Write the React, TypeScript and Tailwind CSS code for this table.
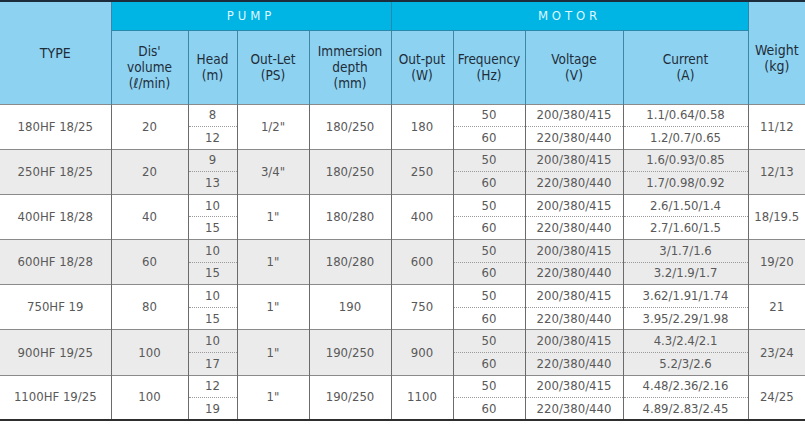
import React from "react"

type Row = {
  type: string
  vol: string
  head: [string, string]
  outlet: string
  depth: string
  output: string
  current: [string, string]
  weight: string
}

const rows: Row[] = [
  { type: "180HF 18/25", vol: "20", head: ["8", "12"], outlet: "1/2\"", depth: "180/250", output: "180", current: ["1.1/0.64/0.58", "1.2/0.7/0.65"], weight: "11/12" },
  { type: "250HF 18/25", vol: "20", head: ["9", "13"], outlet: "3/4\"", depth: "180/250", output: "250", current: ["1.6/0.93/0.85", "1.7/0.98/0.92"], weight: "12/13" },
  { type: "400HF 18/28", vol: "40", head: ["10", "15"], outlet: "1\"", depth: "180/280", output: "400", current: ["2.6/1.50/1.4", "2.7/1.60/1.5"], weight: "18/19.5" },
  { type: "600HF 18/28", vol: "60", head: ["10", "15"], outlet: "1\"", depth: "180/280", output: "600", current: ["3/1.7/1.6", "3.2/1.9/1.7"], weight: "19/20" },
  { type: "750HF 19", vol: "80", head: ["10", "15"], outlet: "1\"", depth: "190", output: "750", current: ["3.62/1.91/1.74", "3.95/2.29/1.98"], weight: "21" },
  { type: "900HF 19/25", vol: "100", head: ["10", "17"], outlet: "1\"", depth: "190/250", output: "900", current: ["4.3/2.4/2.1", "5.2/3/2.6"], weight: "23/24" },
  { type: "1100HF 19/25", vol: "100", head: ["12", "19"], outlet: "1\"", depth: "190/250", output: "1100", current: ["4.48/2.36/2.16", "4.89/2.83/2.45"], weight: "24/25" },
]

const font = { fontFamily: "'DejaVu Sans Condensed', 'Liberation Sans', sans-serif" }

const th = "border-x border-[#3f86a6] px-0 text-center align-middle font-normal text-[13.5px] leading-[16px] text-[#1f2d3a]"
const span = "border-x border-[#6b6b6b] text-center align-middle"
const top = "border-x border-[#6b6b6b] border-b border-b-[#9a9a9a] [border-bottom-style:dotted] text-center align-middle"
const bottom = "border-x border-[#6b6b6b] text-center align-middle"

export default function App() {
  return (
    <div className="w-[805px] h-[425px] bg-white overflow-hidden" style={font}>
      <table className="w-[805px] table-fixed border-collapse border-t-2 border-t-[#1c2c3c] border-b-2 border-b-[#2e2e2e] text-[13px] text-[#595959]">
        <colgroup>
          <col className="w-[111px]" />
          <col className="w-[77px]" />
          <col className="w-[49px]" />
          <col className="w-[72px]" />
          <col className="w-[82px]" />
          <col className="w-[62px]" />
          <col className="w-[72px]" />
          <col className="w-[98px]" />
          <col className="w-[125px]" />
          <col className="w-[57px]" />
        </colgroup>
        <thead>
          <tr className="h-[29px]">
            <th rowSpan={2} className={`${th} border-l-0 bg-[#8dd2f0] text-[14px]`}>TYPE</th>
            <th colSpan={4} className="border-x border-b border-[#2a88ad] bg-[#00b5e3] text-center text-[13px] font-normal tracking-[0.3em] text-[#dff6ff]">PUMP</th>
            <th colSpan={4} className="border-x border-b border-[#2a88ad] bg-[#00b5e3] text-center text-[13px] font-normal tracking-[0.3em] text-[#dff6ff]">MOTOR</th>
            <th rowSpan={2} className={`${th} border-r-0 bg-[#8dd2f0] pt-[10px] text-[14px]`}>Weight<br />(kg)</th>
          </tr>
          <tr className="h-[74px] bg-[#8dd2f0]">
            <th className={th}>Dis'<br />volume<br />(ℓ/min)</th>
            <th className={th}>Head<br />(m)</th>
            <th className={th}>Out-Let<br />(PS)</th>
            <th className={th}>Immersion<br />depth<br />(mm)</th>
            <th className={th}>Out-put<br />(W)</th>
            <th className={th}>Frequency<br />(Hz)</th>
            <th className={th}>Voltage<br />(V)</th>
            <th className={th}>Current<br />(A)</th>
          </tr>
        </thead>
        {rows.map((r, i) => (
          <tbody key={r.type} className={`border-t border-[#8a8a8a] ${i % 2 === 1 ? "bg-[#ebebeb]" : "bg-white"}`}>
            <tr className="h-[22.6px] leading-[16px]">
              <td rowSpan={2} className={`${span} border-l-0`}>{r.type}</td>
              <td rowSpan={2} className={span}>{r.vol}</td>
              <td className={top}>{r.head[0]}</td>
              <td rowSpan={2} className={span}>{r.outlet}</td>
              <td rowSpan={2} className={span}>{r.depth}</td>
              <td rowSpan={2} className={span}>{r.output}</td>
              <td className={top}>50</td>
              <td className={top}>200/380/415</td>
              <td className={top}>{r.current[0]}</td>
              <td rowSpan={2} className={`${span} border-r-0`}>{r.weight}</td>
            </tr>
            <tr className="h-[22.6px] leading-[16px]">
              <td className={bottom}>{r.head[1]}</td>
              <td className={bottom}>60</td>
              <td className={bottom}>220/380/440</td>
              <td className={bottom}>{r.current[1]}</td>
            </tr>
          </tbody>
        ))}
      </table>
    </div>
  )
}
